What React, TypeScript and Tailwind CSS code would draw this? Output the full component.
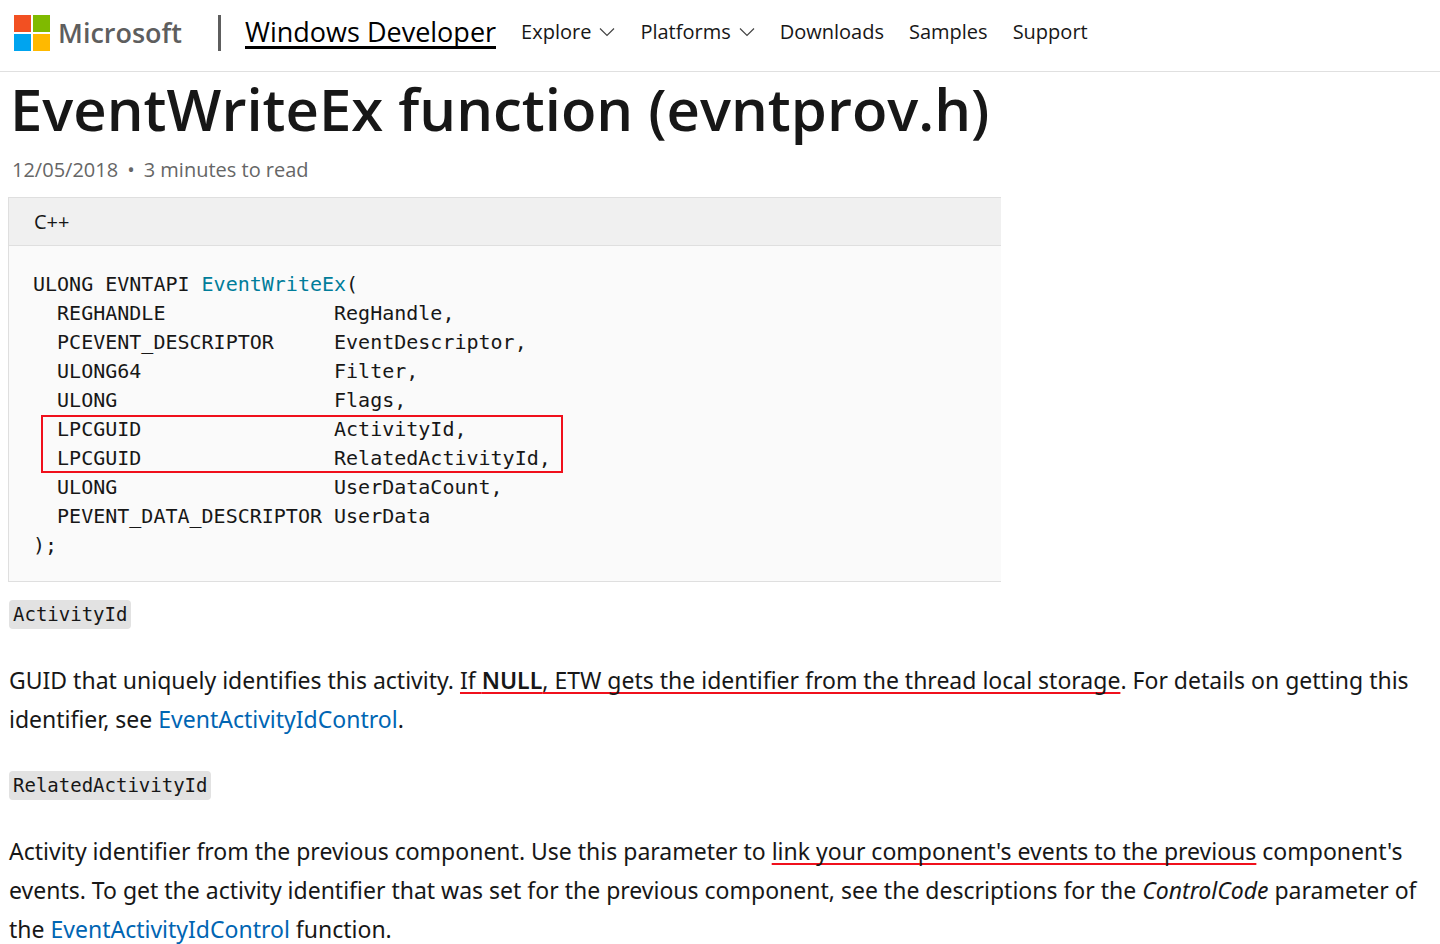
import React from 'react';

const navItems = [
  { label: 'Explore', menu: true },
  { label: 'Platforms', menu: true },
  { label: 'Downloads', menu: false },
  { label: 'Samples', menu: false },
  { label: 'Support', menu: false },
];

const params = [
  { type: 'REGHANDLE', name: 'RegHandle,' },
  { type: 'PCEVENT_DESCRIPTOR', name: 'EventDescriptor,' },
  { type: 'ULONG64', name: 'Filter,' },
  { type: 'ULONG', name: 'Flags,' },
  { type: 'LPCGUID', name: 'ActivityId,' },
  { type: 'LPCGUID', name: 'RelatedActivityId,' },
  { type: 'ULONG', name: 'UserDataCount,' },
  { type: 'PEVENT_DATA_DESCRIPTOR', name: 'UserData' },
];

const formatLines = (from: number, to: number) =>
  params.slice(from, to).map((p) => `  ${p.type.padEnd(23)}${p.name}`).join('\n');

const MicrosoftLogo = () => (
  <svg className="w-9 h-9 shrink-0" viewBox="0 0 36 36" aria-hidden="true">
    <path fill="#f25022" d="M0 0h17v17H0z" />
    <path fill="#7fba00" d="M19 0h17v17H19z" />
    <path fill="#00a4ef" d="M0 19h17v17H0z" />
    <path fill="#ffb900" d="M19 19h17v17H19z" />
  </svg>
);

const Chevron = () => (
  <svg className="w-4 h-4" viewBox="0 0 16 16" fill="none" stroke="#444" strokeWidth="1.2" aria-hidden="true">
    <path d="M1 4.5l7 7 7-7" />
  </svg>
);

const ParamName = ({ children }: { children: React.ReactNode }) => (
  <div className="flex">
    <code className="font-['DejaVu_Sans_Mono','Liberation_Mono',monospace] text-[19px] leading-[29px] bg-[#e2e2e2] rounded px-1">{children}</code>
  </div>
);

const Marked = ({ children }: { children: React.ReactNode }) => (
  <span className="underline decoration-[#f0101c] decoration-2 underline-offset-[3px] [text-decoration-skip-ink:none]">{children}</span>
);

const DocLink = () => (
  <a href="#event-activity-id-control" className="text-[#0065b3]">EventActivityIdControl</a>
);

const App: React.FC = () => {
  return (
    <div className="bg-white text-[#171717] font-['Open_Sans','Noto_Sans',sans-serif]">
      <header className="flex items-center h-[72px] pl-[14px] pb-[5px] border-b border-[#e0e0e0]">
        <a href="#microsoft" className="flex items-center gap-2">
          <MicrosoftLogo />
          <span className="text-[27px] leading-9 font-semibold text-[#5e5e5e]">Microsoft</span>
        </a>
        <div className="w-[3px] h-9 ml-9 mr-6 bg-[#5e5e5e]" />
        <a href="#windows-developer" className="text-[27px] leading-[29px] font-medium text-black border-b-[3px] border-black">
          Windows Developer
        </a>
        <nav className="flex items-center gap-[25px] ml-[25px] pb-[2px] text-xl">
          {navItems.map((item) =>
            item.menu ? (
              <button key={item.label} className="flex items-center gap-2">
                {item.label}
                <Chevron />
              </button>
            ) : (
              <a key={item.label} href={`#${item.label.toLowerCase()}`}>{item.label}</a>
            )
          )}
        </nav>
      </header>

      <main className="px-2">
        <h1 className="text-[58px] leading-[74px] font-semibold px-[2px]">EventWriteEx function (evntprov.h)</h1>
        <p className="flex gap-[9px] px-1 mt-[10px] text-xl leading-7 text-[#666]">
          <span>12/05/2018</span>
          <span>•</span>
          <span>3 minutes to read</span>
        </p>

        <section className="max-w-[993px] mt-[13px] border border-r-0 border-[#dfdfdf] bg-[#fafafa]">
          <div className="px-[25px] text-xl leading-[47px] bg-[#f0f0f0] border-b border-[#dfdfdf]">C++</div>
          <div className="px-6 pt-6 pb-[21px] font-['DejaVu_Sans_Mono','Liberation_Mono',monospace] text-[20px] leading-[29px]">
            <pre className="font-[inherit]">
              ULONG EVNTAPI <span className="text-[#007d9a]">EventWriteEx</span>(
            </pre>
            <pre className="font-[inherit]">{formatLines(0, 4)}</pre>
            <div className="relative">
              <pre className="font-[inherit]">{formatLines(4, 6)}</pre>
              <div className="absolute inset-y-0 left-2 w-[522px] border-2 border-[#f0101c]" />
            </div>
            <pre className="font-[inherit]">{formatLines(6, 8)}</pre>
            <pre className="font-[inherit]">);</pre>
          </div>
        </section>

        <section className="mt-[18px] pl-px text-[23px] leading-[39px] font-['Noto_Sans','Open_Sans',sans-serif]">
          <ParamName>ActivityId</ParamName>
          <p className="mt-8 mb-8">
            GUID that uniquely identifies this activity. <Marked>If <strong className="font-semibold">NULL</strong>, ETW gets the identifier from the thread local storage</Marked>. For details on getting this identifier, see <DocLink />.
          </p>
          <ParamName>RelatedActivityId</ParamName>
          <p className="mt-8">
            Activity identifier from the previous component. Use this parameter to <Marked>link your component's events to the previous</Marked> component's events. To get the activity identifier that was set for the previous component, see the descriptions for the <em>ControlCode</em> parameter of the <DocLink /> function.
          </p>
        </section>
      </main>
    </div>
  );
};

export default App;
